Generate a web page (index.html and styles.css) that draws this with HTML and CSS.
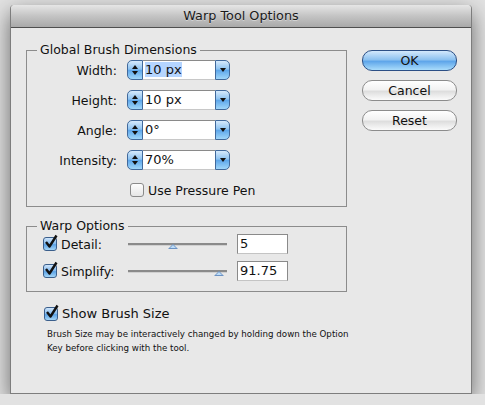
FILE: index.html
```html
<!DOCTYPE html>
<html lang="en">
  <head>
    <meta charset="UTF-8" />
    <title>Warp Tool Options</title>
    <link rel="stylesheet" href="styles.css">
  </head>
  <body>
    <div class="window">
      <div class="titlebar">Warp Tool Options</div>

      <div class="dialog">
        <div class="settings">
          <fieldset class="group brush">
            <legend>Global Brush Dimensions</legend>

            <div class="field-row">
              <span class="field-label">Width:</span>
              <div class="combo">
                <span class="stepper">
                  <svg width="8" height="12" viewBox="0 0 8 12"><path d="M4 1 L7 5 H1 Z M4 11 L7 7 H1 Z" fill="#111"/></svg>
                </span>
                <span class="entry"><span class="selected">10 px</span></span>
                <span class="drop">
                  <svg width="8" height="6" viewBox="0 0 8 6"><path d="M1 1 H7 L4 5 Z" fill="#111"/></svg>
                </span>
              </div>
            </div>

            <div class="field-row">
              <span class="field-label">Height:</span>
              <div class="combo">
                <span class="stepper">
                  <svg width="8" height="12" viewBox="0 0 8 12"><path d="M4 1 L7 5 H1 Z M4 11 L7 7 H1 Z" fill="#111"/></svg>
                </span>
                <span class="entry">10 px</span>
                <span class="drop">
                  <svg width="8" height="6" viewBox="0 0 8 6"><path d="M1 1 H7 L4 5 Z" fill="#111"/></svg>
                </span>
              </div>
            </div>

            <div class="field-row">
              <span class="field-label">Angle:</span>
              <div class="combo">
                <span class="stepper">
                  <svg width="8" height="12" viewBox="0 0 8 12"><path d="M4 1 L7 5 H1 Z M4 11 L7 7 H1 Z" fill="#111"/></svg>
                </span>
                <span class="entry">0°</span>
                <span class="drop">
                  <svg width="8" height="6" viewBox="0 0 8 6"><path d="M1 1 H7 L4 5 Z" fill="#111"/></svg>
                </span>
              </div>
            </div>

            <div class="field-row">
              <span class="field-label">Intensity:</span>
              <div class="combo">
                <span class="stepper">
                  <svg width="8" height="12" viewBox="0 0 8 12"><path d="M4 1 L7 5 H1 Z M4 11 L7 7 H1 Z" fill="#111"/></svg>
                </span>
                <span class="entry">70%</span>
                <span class="drop">
                  <svg width="8" height="6" viewBox="0 0 8 6"><path d="M1 1 H7 L4 5 Z" fill="#111"/></svg>
                </span>
              </div>
            </div>

            <div class="check pressure">
              <span class="box"></span>
              <span>Use Pressure Pen</span>
            </div>
          </fieldset>

          <fieldset class="group warp">
            <legend>Warp Options</legend>

            <div class="warp-row">
              <span class="box on">
                <svg width="16" height="16" viewBox="0 0 16 16"><path d="M3 8 L6.5 12.5 L13.5 1.5" fill="none" stroke="#111" stroke-width="2.4" stroke-linejoin="round"/></svg>
              </span>
              <span class="warp-label">Detail:</span>
              <div class="slider">
                <span class="thumb" style="left: 45%"></span>
              </div>
              <span class="num">5</span>
            </div>

            <div class="warp-row">
              <span class="box on">
                <svg width="16" height="16" viewBox="0 0 16 16"><path d="M3 8 L6.5 12.5 L13.5 1.5" fill="none" stroke="#111" stroke-width="2.4" stroke-linejoin="round"/></svg>
              </span>
              <span class="warp-label">Simplify:</span>
              <div class="slider">
                <span class="thumb" style="left: 92%"></span>
              </div>
              <span class="num">91.75</span>
            </div>
          </fieldset>

          <div class="check show-size">
            <span class="box on">
              <svg width="16" height="16" viewBox="0 0 16 16"><path d="M3 8 L6.5 12.5 L13.5 1.5" fill="none" stroke="#111" stroke-width="2.4" stroke-linejoin="round"/></svg>
            </span>
            <span>Show Brush Size</span>
          </div>

          <p class="hint">
            Brush Size may be interactively changed by holding down the Option<br>
            Key before clicking with the tool.
          </p>
        </div>

        <div class="actions">
          <button class="btn default">OK</button>
          <button class="btn">Cancel</button>
          <button class="btn">Reset</button>
        </div>
      </div>
    </div>
  </body>
</html>
```

FILE: styles.css
```css
body {
  margin: 0;
  background: #e2e2e2;
  font-family: "DejaVu Sans", sans-serif;
  font-size: 12.5px;
  color: #111;
}
.window {
  margin: 5px 0 0 10px;
  width: 460px;
  height: 388px;
  background: #e8e8e8;
  border: 1px solid #7d7d7d;
  border-top: none;
  border-radius: 4px 4px 0 0;
  box-shadow: 0 8px 22px rgba(0, 0, 0, 0.55);
}
.titlebar {
  height: 22px;
  line-height: 22px;
  text-align: center;
  font-size: 12.8px;
  color: #1a1a1a;
  text-shadow: 0 1px 0 rgba(255, 255, 255, 0.4);
  background: linear-gradient(#e6e6e6, #c4c4c4 50%, #a9a9a9);
  border-bottom: 1px solid #4f4f4f;
  border-radius: 4px 4px 0 0;
}
.dialog {
  display: flex;
  padding: 14px 0 0 15px;
}
.settings {
  width: 321px;
}

/* group boxes */
.group {
  margin: 0;
  padding: 2px 0 9px 0;
  border: 1px solid #8c8c8c;
  min-width: 0;
}
.group legend {
  margin-left: 10px;
  padding: 0 3px;
  line-height: 16px;
  font-size: 12.5px;
}
.warp {
  margin-top: 11px;
  padding: 0 0 10px 0;
}

/* labelled combo fields */
.field-row {
  display: flex;
  align-items: center;
  height: 20px;
  margin-bottom: 10px;
}
.field-label {
  width: 90px;
  text-align: right;
  margin-right: 10px;
}
.combo {
  display: flex;
  height: 20px;
}
.stepper,
.drop {
  display: flex;
  align-items: center;
  justify-content: center;
  background: linear-gradient(#d6eafc, #8ec3f1 45%, #5ea7ea 52%, #9fd6fa);
  border: 1px solid #41699b;
}
.stepper {
  width: 14px;
  border-radius: 5px 0 0 5px;
}
.drop {
  width: 13px;
  border-radius: 0 5px 5px 0;
}
.entry {
  width: 70px;
  padding-left: 2px;
  background: #fff;
  border-top: 1px solid #8a8a8a;
  border-bottom: 1px solid #c8c8c8;
  line-height: 18px;
  font-size: 13px;
}
.selected {
  background: #b5d5ff;
}

/* checkboxes */
.check {
  display: flex;
  align-items: center;
  gap: 4px;
}
.box {
  position: relative;
  width: 12px;
  height: 12px;
  border: 1px solid #8a8a8a;
  border-radius: 3px;
  background: linear-gradient(#fdfdfd, #e6e6e6);
  flex: none;
}
.box.on {
  border-color: #3b5f8c;
  background: linear-gradient(#cfe5fb, #7fb8ee 50%, #5ca3e6 55%, #a4d6f8);
}
.box svg {
  position: absolute;
  left: -1px;
  top: -4px;
}
.pressure {
  margin: 13px 0 0 103px;
  height: 14px;
}

/* warp sliders */
.warp-row {
  display: flex;
  align-items: center;
  height: 20px;
  padding-left: 16px;
  margin-bottom: 7px;
}
.warp-row:last-child {
  margin-bottom: 0;
}
.warp-label {
  margin-left: 4px;
  width: 67px;
}
.slider {
  position: relative;
  width: 99px;
  height: 2px;
  background: #8a8a8a;
  border-bottom: 1px solid #d0d0d0;
}
.thumb {
  position: absolute;
  top: 1px;
  width: 0;
  height: 0;
  margin-left: -5px;
  border-left: 5px solid transparent;
  border-right: 5px solid transparent;
  border-bottom: 5px solid #6c93c4;
}
.thumb::after {
  content: "";
  position: absolute;
  left: -3px;
  top: 1px;
  border-left: 3px solid transparent;
  border-right: 3px solid transparent;
  border-bottom: 3px solid #bcdcf7;
}
.num {
  margin-left: 10px;
  width: 47px;
  height: 18px;
  padding-left: 2px;
  line-height: 18px;
  font-size: 13px;
  background: #fff;
  border: 1px solid #8a8a8a;
  border-bottom-color: #c4c4c4;
}

.show-size {
  margin: 14px 0 0 18px;
  font-size: 13px;
}
.hint {
  margin: 6px 0 0 21px;
  font-size: 8.7px;
  line-height: 14px;
  white-space: nowrap;
}

/* push buttons */
.actions {
  display: flex;
  flex-direction: column;
  gap: 9px;
  margin-left: 15px;
  padding-top: 8px;
}
.btn {
  width: 95px;
  height: 21px;
  padding: 0;
  font-family: "DejaVu Sans", sans-serif;
  font-size: 12.5px;
  color: #111;
  border: 1px solid #8c8c8c;
  border-radius: 10px;
  background: linear-gradient(#ffffff, #f2f2f2 45%, #dedede 55%, #fbfbfb);
}
.btn.default {
  border-color: #2c4f85;
  background: linear-gradient(#d3e8fc, #8dc2f0 45%, #5fa6ea 55%, #a9dcfb);
}
```
